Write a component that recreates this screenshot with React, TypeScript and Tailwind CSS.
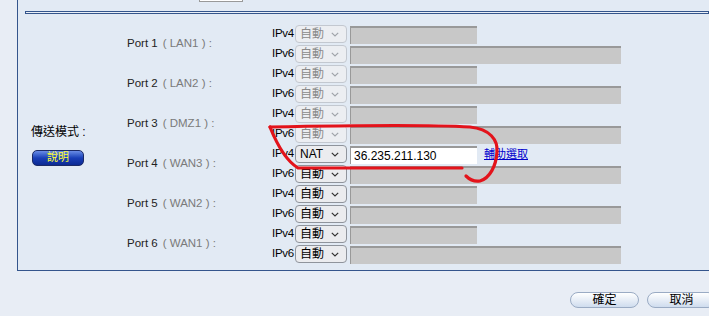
import React from 'react';

const FONT = { fontFamily: '"Liberation Sans", "Noto Sans CJK TC", sans-serif' };

interface PortRow {
  name: string;
  iface: string;
  disabled?: boolean;
  nat?: boolean;
}

const PORTS: PortRow[] = [
  { name: 'Port 1', iface: 'LAN1', disabled: true },
  { name: 'Port 2', iface: 'LAN2', disabled: true },
  { name: 'Port 3', iface: 'DMZ1', disabled: true },
  { name: 'Port 4', iface: 'WAN3', nat: true },
  { name: 'Port 5', iface: 'WAN2' },
  { name: 'Port 6', iface: 'WAN1' },
];

function Chevron({ dim }: { dim?: boolean }) {
  return (
    <svg width="8" height="5" viewBox="0 0 8 5" className="shrink-0">
      <path d="M0.8 0.8 L4 4 L7.2 0.8" fill="none" stroke={dim ? '#a0a4aa' : '#333'} strokeWidth="1.2" />
    </svg>
  );
}

function FakeSelect({ value, dim }: { value: string; dim?: boolean }) {
  return (
    <div
      className={`flex items-center justify-between w-[52px] h-[18px] rounded-[4px] border pl-[4px] pr-[7px] text-[12px] leading-none ${
        dim ? 'border-[#c3c8d0] bg-[#eceef2] text-[#8a8a8a]' : 'border-[#8f949c] bg-[#ebecef] text-black'
      }`}
    >
      <span>{value}</span>
      <Chevron dim={dim} />
    </div>
  );
}

function IpRow({ label, select, dim, wide, value, link }: { label: string; select: string; dim?: boolean; wide?: boolean; value?: string; link?: boolean }) {
  return (
    <div className="flex items-center h-[20px]">
      <span className="w-[23px] text-[11.5px] text-black tracking-[-0.3px]">{label}</span>
      <FakeSelect value={select} dim={dim} />
      <div
        className={`ml-[3px] h-[18px] mt-[1px] border-t-2 border-l border-[#999] flex items-center pl-[3px] text-[12px] text-black ${
          value !== undefined ? 'bg-white' : 'bg-[#c8c8c8]'
        } ${wide ? 'w-[271px]' : 'w-[127px]'}`}
      >
        {value}
      </div>
      {link && <span className="ml-[7px] text-[11px] text-[#0000cc] underline">輔助選取</span>}
    </div>
  );
}

export default function App() {
  return (
    <div className="relative w-[709px] h-[316px] overflow-hidden bg-[#e8edf5]" style={FONT}>
      <div className="ml-[17px] h-[271px] border-l border-b border-[#34558c] bg-[#e2eaf4]">
        <div className="ml-[181px] w-[44px] h-[2px] border-x border-b border-[#999] bg-white" />
        <div className="ml-[7px] mt-[9px] h-[3px] border border-[#34558c] bg-[#e9eff7]" />

        <div className="flex mt-[10px]">
          <div className="w-[109px] pl-[13px] flex flex-col justify-center">
            <span className="text-[12px] text-black">傳送模式 :</span>
            <div className="mt-[9px] ml-[1px] w-[52px] h-[16px] rounded-[5px] border border-[#1b2a66] bg-gradient-to-b from-[#6a8ce6] via-[#1a3fb8] to-[#0c2a92] flex items-center justify-center text-[11px] text-[#ffff33] leading-none">
              說明
            </div>
          </div>

          <div className="w-[145px] flex flex-col">
            {PORTS.map((p) => (
              <div key={p.name} className="h-[40px] flex items-center text-[11.5px]">
                <span className="text-[#222]">{p.name}</span>
                <span className="ml-[5px] text-[#7a7a7a] whitespace-pre">( {p.iface} ) :</span>
              </div>
            ))}
          </div>

          <div className="flex flex-col">
            {PORTS.map((p) => (
              <React.Fragment key={p.name}>
                <IpRow
                  label="IPv4"
                  select={p.nat ? 'NAT' : '自動'}
                  dim={p.disabled}
                  value={p.nat ? '36.235.211.130' : undefined}
                  link={p.nat}
                />
                <IpRow label="IPv6" select="自動" dim={p.disabled} wide />
              </React.Fragment>
            ))}
          </div>
        </div>
      </div>

      <div className="flex gap-[8px] ml-[570px] mt-[21px]">
        <div className="shrink-0 w-[69px] h-[16px] rounded-full border border-[#9aabc4] bg-gradient-to-b from-[#ffffff] to-[#cfdcee] flex items-center justify-center text-[12px] text-black leading-none">
          確定
        </div>
        <div className="shrink-0 w-[69px] h-[16px] rounded-full border border-[#9aabc4] bg-gradient-to-b from-[#ffffff] to-[#cfdcee] flex items-center justify-center text-[12px] text-black leading-none">
          取消
        </div>
      </div>

      <svg className="absolute left-0 top-0 pointer-events-none" width="709" height="316">
        <path
          d="M270 127 C320 126 420 124 470 127 C490 129 498 140 497 152 C496 166 490 178 480 181 C474 182 469 179 466 176"
          fill="none"
          stroke="#e3131b"
          strokeWidth="3.2"
          strokeLinecap="round"
        />
        <path
          d="M270 127 C276 142 285 160 298 168 L462 168"
          fill="none"
          stroke="#e3131b"
          strokeWidth="3.2"
          strokeLinecap="round"
        />
      </svg>
    </div>
  );
}
